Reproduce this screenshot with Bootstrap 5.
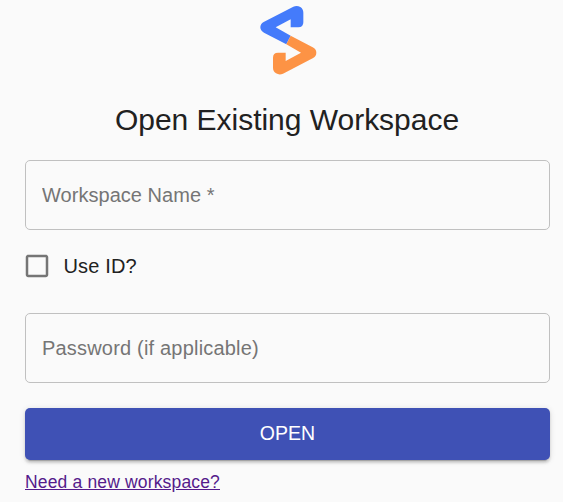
<!DOCTYPE html>
<html lang="en">
<head>
<meta charset="utf-8">
<meta name="viewport" content="width=device-width, initial-scale=1">
<title>Open Existing Workspace</title>
<link href="https://cdn.jsdelivr.net/npm/bootstrap@5.3.0/dist/css/bootstrap.min.css" rel="stylesheet">
<style>
body{background:#fafafa;color:#212121;font-family:"Liberation Sans",Arial,sans-serif;font-size:20px;overflow:hidden}
.workspace-page{padding:0 13px 0 25px}
.logo{width:100px;height:84px;margin-left:5px}
.page-title{font-size:30px;line-height:40px;font-weight:400;margin:16px 1px 20px 0;letter-spacing:-.02px}
.outlined{height:70px;background:transparent!important;border:1px solid #c0c0c0;border-radius:5px;padding:0 16px;font-size:20px;letter-spacing:.19px;color:#212121}
.outlined::placeholder{color:#757575;opacity:1}
.name-field{letter-spacing:.04px}
.use-id{height:30px;margin:21px 0 32px}
.use-id svg{width:30px;height:30px;margin-left:-3px}
.use-id .form-check-input{width:30px;height:30px;margin:0 0 0 -30px;opacity:0}
.use-id label{margin-left:11.5px;letter-spacing:.15px;line-height:30px}
.btn-open{height:52px;margin-top:25px;background:#3f51b5;color:#fff;border:0;border-radius:5px;font-size:19.5px;letter-spacing:0;padding:0;box-shadow:0 4px 1px -3px rgba(0,0,0,.2),0 2.5px 2.5px rgba(0,0,0,.14),0 1px 6px rgba(0,0,0,.12)}
.new-link{color:#551a8b;font-size:17.5px;line-height:24px;letter-spacing:.16px;margin-top:10px}
</style>
</head>
<body>
<main class="workspace-page d-flex flex-column">
  <svg class="logo align-self-center" viewBox="0 0 300 252" aria-hidden="true">
    <path fill="#447bfb" d="M139 133L72 98Q61 92 61 82Q61 72 71 66L160 20Q171 15 181 21Q190 27 190 38V67Q190 82 175 82H152V58L107 82L152 107Z"/>
    <path fill="#fd9345" d="M152 107L218 142Q229 148 229 158Q229 169 218 175L129 221Q118 226 108 220Q99 214 99 203V173Q99 158 114 158H137V183L183 158L139 133Z"/>
  </svg>
  <h1 class="page-title text-center">Open Existing Workspace</h1>
  <form class="d-flex flex-column">
    <input class="form-control outlined name-field" type="text" placeholder="Workspace Name *" aria-label="Workspace Name">
    <div class="use-id d-flex align-items-center">
      <svg viewBox="0 0 24 24" fill="#757575" aria-hidden="true"><path d="M19 5v14H5V5h14m0-2H5c-1.100 0-2 .9-2 2v14c0 1.100.9 2 2 2h14c1.100 0 2-.9 2-2V5c0-1.100-.9-2-2-2z"/></svg>
      <input class="form-check-input" type="checkbox" id="useId">
      <label for="useId">Use ID?</label>
    </div>
    <input class="form-control outlined" type="password" placeholder="Password (if applicable)" aria-label="Password">
    <button class="btn btn-open w-100" type="button">OPEN</button>
  </form>
  <a class="new-link align-self-start" href="#">Need a new workspace?</a>
</main>
<script src="https://cdn.jsdelivr.net/npm/bootstrap@5.3.0/dist/js/bootstrap.bundle.min.js"></script>
</body>
</html>
